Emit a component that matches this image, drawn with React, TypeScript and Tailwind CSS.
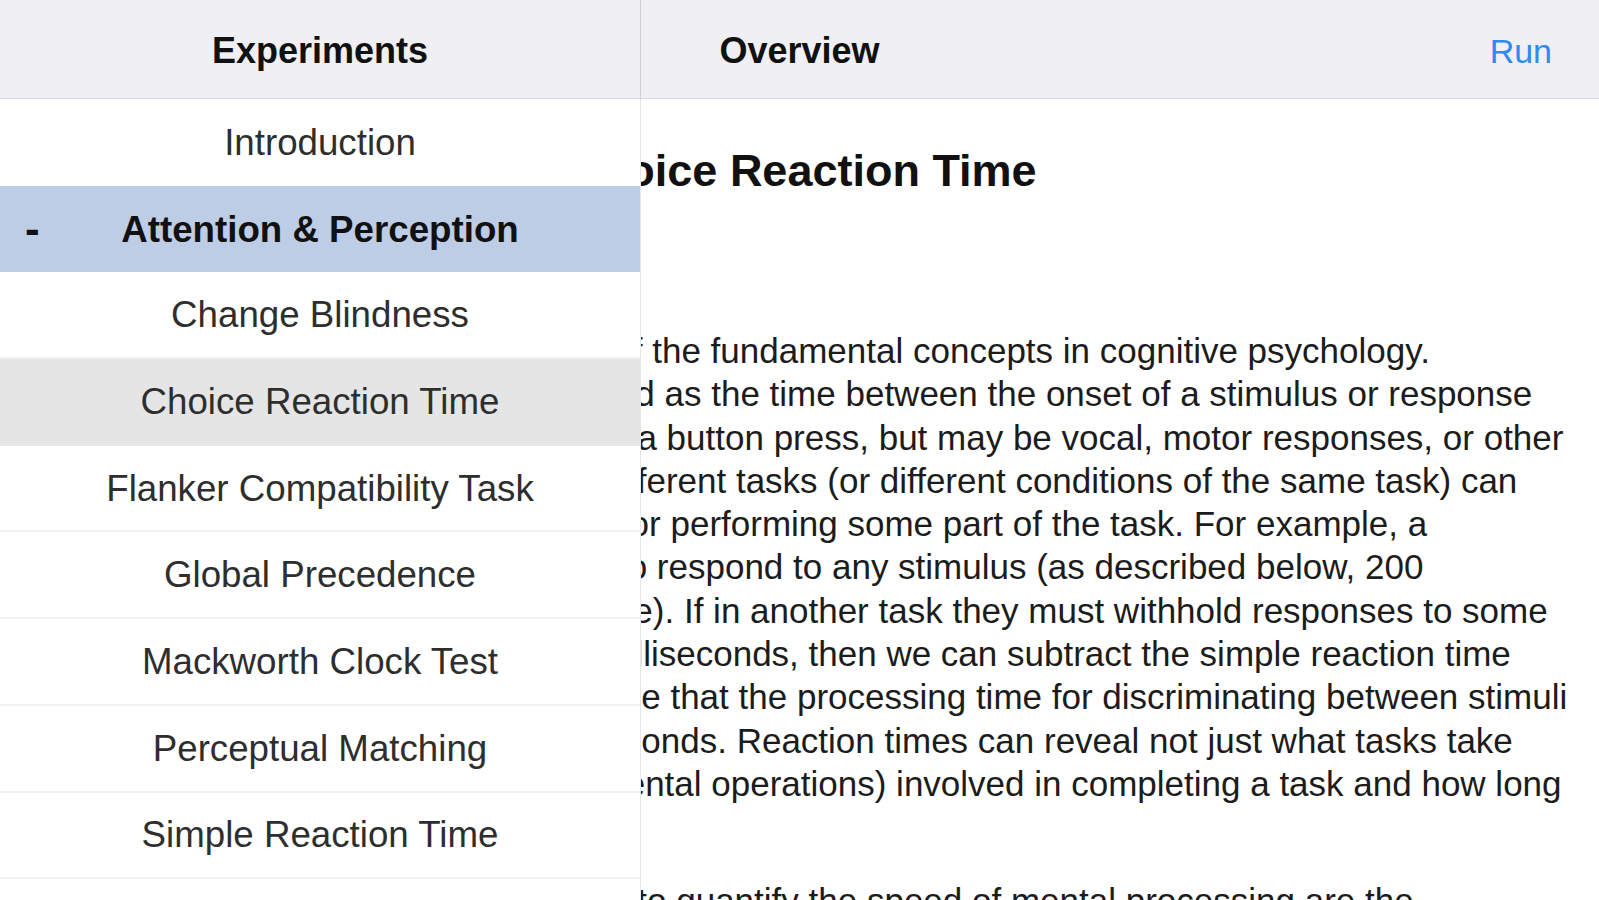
import React from "react";

const experiments = [
  "Change Blindness",
  "Choice Reaction Time",
  "Flanker Compatibility Task",
  "Global Precedence",
  "Mackworth Clock Test",
  "Perceptual Matching",
  "Simple Reaction Time",
  "Visual Search",
];

const current = "Choice Reaction Time";

// lines of the overview text; the start of each line sits under the sidebar
const paragraph = [
  "Response time (RT) is arguably one of the fundamental concepts in cognitive psychology.",
  "Simple reaction time is typically defined as the time between the onset of a stimulus or response",
  "signal and the reaction, which is often a button press, but may be vocal, motor responses, or other",
  "signals. Comparing reaction time in different tasks (or different conditions of the same task) can",
  "reveal how long it takes a participant for performing some part of the task. For example, a",
  "participant might need a certain time to respond to any stimulus (as described below, 200",
  "milliseconds is a common reaction time). If in another task they must withhold responses to some",
  "stimuli but respond to others in 350 milliseconds, then we can subtract the simple reaction time",
  "from the other reaction time to conclude that the processing time for discriminating between stimuli",
  "requires around 150 additional milliseconds. Reaction times can reveal not just what tasks take",
  "longer, but also what processes (or mental operations) involved in completing a task and how long",
  "each one takes.",
];

const next = ["The two most common methods used to quantify the speed of mental processing are the"];

const Detail = () => (
  <div className="flex h-full w-full flex-col">
    <div className="grid h-[99px] shrink-0 grid-cols-[1fr_auto_1fr] items-center border-b border-[#dcdce0] bg-[#efeff4] pt-[4px]">
      <div />
      <div className="text-[36px] font-bold text-[#111]">Overview</div>
      <div className="justify-self-end pr-[47px] text-[34px] text-[#2d8cf2]">Run</div>
    </div>
    <div className="flex-1 overflow-hidden pl-[44px] pr-[39px]">
      <h1 className="mt-[46px] text-center text-[45px] font-bold leading-[52px] text-[#111]">
        Choice Reaction Time
      </h1>
      <div className="mt-[132px] text-[35px] leading-[43.3px] text-[#1c1c1c]">
        {paragraph.map((line) => (
          <div key={line} className="whitespace-nowrap">
            {line}
          </div>
        ))}
      </div>
      <div className="mt-[30px] text-[35px] leading-[43.3px] text-[#1c1c1c]">
        {next.map((line) => (
          <div key={line} className="whitespace-nowrap">
            {line}
          </div>
        ))}
      </div>
    </div>
  </div>
);

const Row = ({ label }: { label: string }) => (
  <div
    className={`flex h-[86.7px] shrink-0 items-center justify-center border-b-2 text-[36.7px] text-[#2e2e2e] ${
      label === current ? "border-[#e8e8e8] bg-[#e5e5e5]" : "border-[#f1f1f1] bg-white"
    }`}
  >
    {label}
  </div>
);

const Sidebar = () => (
  <aside className="absolute inset-y-0 left-0 flex w-[641px] flex-col bg-white">
    <div className="flex h-[99px] shrink-0 items-center justify-center border-b border-r border-b-[#dcdce0] border-r-[#cfcfd3] bg-[#efeff4] pt-[4px] text-[36px] font-bold text-[#111]">
      Experiments
    </div>
    <div className="flex flex-1 flex-col overflow-hidden border-r border-[#e6e6e6]">
      <div className="flex h-[86.7px] shrink-0 items-center justify-center bg-white text-[36.7px] text-[#2e2e2e]">
        Introduction
      </div>
      <div className="grid h-[86.7px] shrink-0 grid-cols-[1fr_auto_1fr] items-center bg-[#bdcde6] text-[36.7px] font-bold text-[#111]">
        <span className="pl-[25px] text-[44px] leading-none">-</span>
        <span>Attention &amp; Perception</span>
        <span />
      </div>
      {experiments.map((e) => (
        <Row key={e} label={e} />
      ))}
    </div>
  </aside>
);

export default function App() {
  return (
    <div className="relative h-[900px] w-[1599px] overflow-hidden bg-white font-['Liberation_Sans',Arial,sans-serif]">
      <Detail />
      <Sidebar />
    </div>
  );
}
